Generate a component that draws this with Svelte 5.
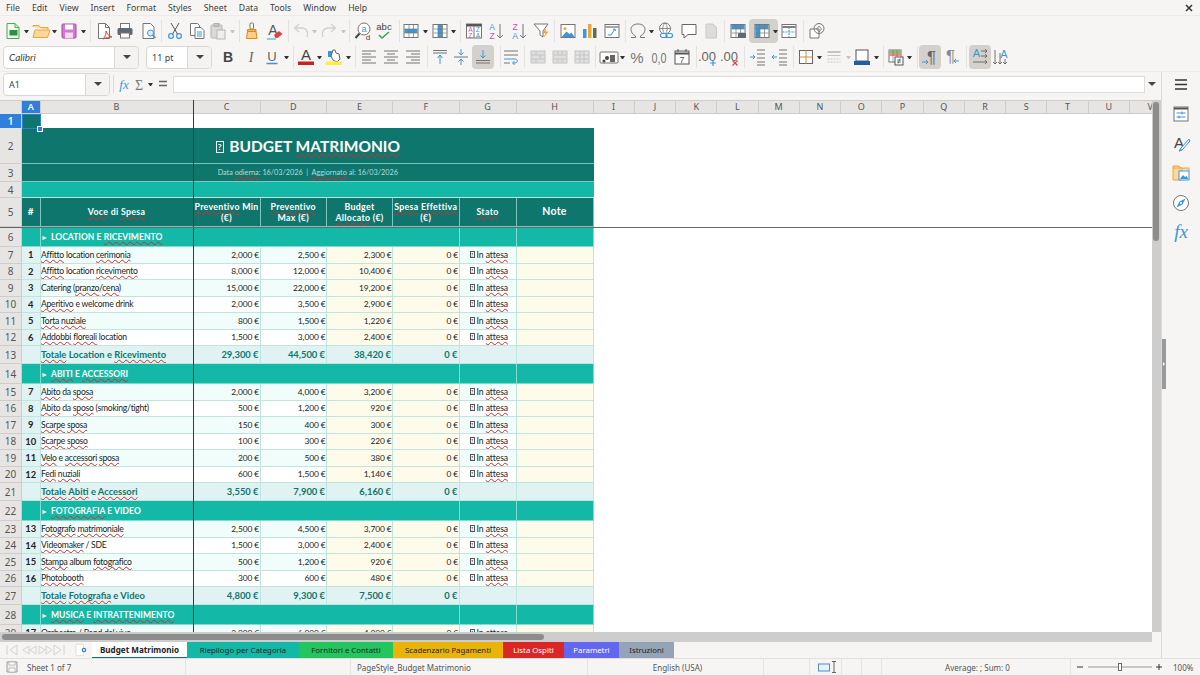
<script>
// toolbar icons, all in a 20x20 box
const G = "#757575";
const B = "#3b97da";
const table = (f) => `<rect x="3" y="3.5" width="14" height="13" fill="#fff" stroke="${G}"/>${f}<path d="M3.5 8h13M3.5 12h13M8 4v12M12.5 4v12" stroke="${G}" stroke-width=".7"/>`;
const lines = (ys, x1 = 3, x2 = 17) => ys.map((y) => `<path d="M${x1} ${y}H${x2}" stroke="${G}"/>`).join("");
const t = (s, x, y, size, fill, extra = "", fam = "Liberation Sans") => `<text x="${x}" y="${y}" font-size="${size}" fill="${fill}" font-family="${fam}" text-anchor="middle" ${extra}>${s}</text>`;
const SERIF = "Liberation Serif";

const icons = {
	new: `<path d="M4 2.5h8l4 4v11H4z" fill="#f1f9f1" stroke="#4aa853"/><path d="M12 2.5v4h4" fill="none" stroke="#4aa853"/><rect x="6.5" y="9" width="8" height="5.5" fill="#2f8f45"/>`,
	open: `<path d="M2 6V4.5h6l1.5 2H17V9" fill="#fcd9a2" stroke="#eea63c"/><path d="M2 16.5 4 9h15l-2.5 7.5z" fill="#ffd79a" stroke="#eea63c"/>`,
	save: `<rect x="3" y="3" width="14" height="14" rx="1" fill="#d678d0" stroke="#a84aa4"/><rect x="6" y="3.5" width="8" height="5" fill="#fff"/><rect x="6" y="11.5" width="8" height="5.5" fill="#f4d9f2"/>`,
	pdf: `<path d="M4.5 2.5h7l4 4v11h-11z" fill="#fff" stroke="${G}"/><path d="M11.5 2.5v4h4" fill="none" stroke="${G}"/><path d="M9 18c3-3 3-6 3-8 1 3 3 5 6 6-3 0-6 .5-9 2z" fill="none" stroke="#e0433a"/>`,
	print: `<rect x="5.5" y="2.5" width="9" height="5" fill="#fff" stroke="${G}"/><rect x="2.5" y="7" width="15" height="7" rx="1.5" fill="#5f6973"/><rect x="5.5" y="12" width="9" height="5" fill="#fff" stroke="${G}"/>`,
	preview: `<path d="M4 2.5h7.5l3.5 3.5v11.5H4z" fill="#fff" stroke="${G}"/><circle cx="11.5" cy="12" r="3" fill="#dff0fb" stroke="${B}"/><path d="M13.5 14l3 3" stroke="${B}" stroke-width="1.5"/>`,
	cut: `<path d="M6 2l6.5 11M14 2 7.500 13" stroke="#555" fill="none"/><circle cx="6" cy="15" r="2.400" fill="none" stroke="${B}" stroke-width="1.200"/><circle cx="14" cy="15" r="2.400" fill="none" stroke="${B}" stroke-width="1.200"/>`,
	copy: `<path d="M3.500 2.500h7l2 2v10h-9z" fill="#fff" stroke="${G}"/><path d="M8 6.500h6l3 3v8H8z" fill="#fff" stroke="${G}"/><path d="M10 11h5M10 13h5M10 15h5" stroke="${B}"/>`,
	paste: `<rect x="3" y="4" width="11" height="13" rx="1" fill="#d9d9d9" stroke="#b5b5b5"/><rect x="6" y="2.500" width="5" height="3" fill="#c4c4c4" stroke="#b0b0b0"/><rect x="9" y="9" width="8" height="9" fill="#eee" stroke="#b5b5b5"/>`,
	clone: `<rect x="8" y="2" width="3.500" height="6" rx="1" fill="#fff" stroke="#777"/><path d="M5.500 8.500h8.500v2h-8.500z" fill="#f5b453" stroke="#d98a1f"/><path d="M5.500 10.500h8.500l1 7h-10.500z" fill="#fbcf8a" stroke="#d98a1f"/>`,
	clear: t("A", 9, 14, 14, "#555") + `<path d="M10 14l5-4 3.500 3-5 4h-2z" fill="#e2403a"/><path d="M3 18h9" stroke="${B}"/>`,
	undo: `<path d="M16 16c2-5-1-9-5-9H5" fill="none" stroke="#d0d0d0" stroke-width="1.300"/><path d="M8 3 3.500 7 8 11" fill="none" stroke="#d0d0d0" stroke-width="1.300"/>`,
	redo: `<path d="M4 16c-2-5 1-9 5-9h6" fill="none" stroke="#d0d0d0" stroke-width="1.300"/><path d="M12 3l4.500 4L12 11" fill="none" stroke="#d0d0d0" stroke-width="1.300"/>`,
	find: `<circle cx="11" cy="8" r="6" fill="#fff" stroke="${G}"/>` + t("a", 11, 11, 9, B) + `<path d="M6.500 12.500 2.500 17" stroke="#444" stroke-width="2"/>` + t("d", 15, 19, 8, "#444"),
	spell: t("abc", 10, 9, 9.500, "#444") + `<path d="M5 14l3 3 7-6" fill="none" stroke="#3fa14a" stroke-width="1.500"/>`,
	rows: table(`<rect x="3.500" y="8" width="13" height="4" fill="${B}"/>`),
	cols: table(`<rect x="8" y="4" width="4.500" height="12" fill="${B}"/>`),
	sort: `<rect x="2.500" y="3" width="15" height="14" fill="#fff" stroke="${G}"/><rect x="2.500" y="3" width="15" height="2.500" fill="#555"/><path d="M10 5.500V17" stroke="${G}"/>` + t("A", 6.300, 11, 6.500, "#b557c9") + t("Z", 6.300, 16.500, 6.500, "#b557c9") + t("Z", 13.800, 11, 6.500, B) + t("A", 13.800, 16.500, 6.500, B),
	asc: t("A", 6, 9, 8.500, B) + t("Z", 6, 17.500, 8.500, "#b557c9") + `<path d="M14 3v14M11 14l3 3 3-3" fill="none" stroke="${G}"/>`,
	desc: t("Z", 6, 9, 8.500, "#b557c9") + t("A", 6, 17.500, 8.500, B) + `<path d="M14 3v14M11 14l3 3 3-3" fill="none" stroke="${G}"/>`,
	filter: `<path d="M3 3h14l-5 7v6l-3-2v-4z" fill="#fff" stroke="${G}"/><path d="M15 7l-3.500 5h3l-2 5 5-6.500h-3z" fill="#f0a53a"/>`,
	image: `<rect x="3" y="3.500" width="14" height="13" fill="#fff" stroke="${G}"/><circle cx="7" cy="7.500" r="1.500" fill="#f0a53a"/><path d="M3.500 16l5-5.500 3 2.500 2-1.500 3 4.500z" fill="${B}"/>`,
	chart: `<rect x="3" y="8" width="3.500" height="9" fill="${B}"/><rect x="8" y="3" width="3.500" height="14" fill="#f0a53a"/><rect x="13" y="7" width="3.500" height="10" fill="#666"/>`,
	pivot: `<rect x="3" y="3.500" width="14" height="13" fill="#fff" stroke="${G}"/><path d="M3.500 6h13" stroke="#888" stroke-width="1.500"/><path d="M6 14h3l4-6M13 8l-2 .5M13 8l.5 2" fill="none" stroke="${B}"/>`,
	omega: `<path d="M3 16.500h4.500V15C4.500 13.500 3 11 3 8.500 3 5 6 3 10 3s7 2 7 5.500c0 2.500-1.500 5-4.500 6.500v1.500H17" fill="none" stroke="${G}"/>`,
	link: `<circle cx="9" cy="7.500" r="5.500" fill="#fff" stroke="${G}"/><path d="M3.500 7.500h11M9 2c-3 3-3 8 0 11M9 2c3 3 3 8 0 11" fill="none" stroke="${G}" stroke-width=".8"/><rect x="4.500" y="12.500" width="6.500" height="4" rx="2" fill="#fff" stroke="${B}" stroke-width="1.200"/><rect x="10" y="12.500" width="6.500" height="4" rx="2" fill="none" stroke="${B}" stroke-width="1.200"/>`,
	comment: `<path d="M3 3.500h14v10H9l-4 3.500v-3.500H3z" fill="#fff" stroke="#666"/>`,
	headers: `<path d="M5 3h7l3.500 3.500V17H5z" fill="#dcdcdc" stroke="#c9c9c9"/>`,
	printarea: table(`<rect x="3.500" y="4" width="13" height="4" fill="${B}"/>`) + `<rect x="10" y="12" width="8" height="5" rx="1" fill="#5f6973"/>`,
	freeze: table(`<rect x="3.500" y="4" width="13" height="4" fill="${B}"/><rect x="3.500" y="4" width="4.500" height="12" fill="${B}"/>`),
	split: `<rect x="3" y="3.500" width="14" height="13" fill="#fff" stroke="${G}"/><path d="M3.500 6h13" stroke="#555" stroke-width="1.500"/><path d="M3.500 11h13" stroke="${B}" stroke-dasharray="2 1"/><path d="M10 6v10" stroke="${B}" stroke-dasharray="2 1"/>`,
	shapes: `<path d="M3 8h9v9H3z" fill="#fff" stroke="${G}"/><circle cx="12" cy="7.500" r="5" fill="none" stroke="${G}"/><path d="M12 5l2.500 3-2.500 3-2.500-3z" fill="none" stroke="${G}" stroke-width=".8"/>`,
	bold: t("B", 10, 15, 14, "#444", 'font-weight="bold"'),
	italic: t("I", 10, 15, 14, "#666", 'font-style="italic"', SERIF),
	under: t("U", 10, 13.500, 13, "#666") + `<path d="M4.500 16.500h11" stroke="${B}" stroke-width="1.500"/>`,
	fcolor: t("A", 10, 13, 15, "#444") + `<rect x="2" y="14.500" width="16" height="3.500" fill="#c9211e"/>`,
	bgcolor: `<path d="M4 4h6v6H4z" fill="${B}"/><path d="M9 3l2 0 1 3 3 1 1 5-3 3-4-2-2-4z" fill="#fff" stroke="#666"/><rect x="2" y="14.500" width="16" height="3.500" fill="#ffef3a"/>`,
	left: lines([4, 10, 16]) + lines([7, 13], 3, 12),
	center: lines([4, 10, 16]) + lines([7, 13], 6, 14),
	right: lines([4, 10, 16]) + lines([7, 13], 8, 17),
	top: lines([3.500, 6]) + `<path d="M10 8v9M7.500 11 10 8l2.500 3" fill="none" stroke="${B}"/>`,
	mid: lines([10]) + `<path d="M10 2v6M7.500 5.500 10 8l2.500-2.500M10 18v-6M7.500 14.500 10 12l2.500 2.500" fill="none" stroke="${B}"/>`,
	bot: lines([13.500, 16]) + `<path d="M10 3v8M7.500 8.500 10 11l2.500-2.500" fill="none" stroke="${B}"/>`,
	wrap: lines([4, 8]) + lines([16], 3, 9) + `<path d="M3 12h11c3 0 3 4 0 4h-2M13.500 14l-2 2 2 2" fill="none" stroke="${B}"/>`,
	merge: `<rect x="3" y="4" width="14" height="12" fill="#dedede" stroke="#c4c4c4"/><path d="M3.500 8h13M3.500 12h13M8 4v4M12 8v4M8 12v4" stroke="#c4c4c4"/>`,
	merge2: `<rect x="3" y="4" width="14" height="12" fill="#dedede" stroke="#c4c4c4"/><path d="M3.500 8h13M3.500 12h13M8 4v4M12 4v4M8 12v4M12 12v4" stroke="#c4c4c4"/>`,
	merge3: `<rect x="3" y="4" width="14" height="12" fill="#e2e2e2" stroke="#c4c4c4"/><path d="M3.500 8h13M3.500 12h13M8 4v12M12 4v12" stroke="#c4c4c4"/>`,
	currency: `<rect x="1" y="5" width="18" height="11" rx="1" fill="#fff" stroke="${G}"/><circle cx="8" cy="11" r="2" fill="#444"/><rect x="11" y="8" width="5" height="7" fill="#666"/><circle cx="5" cy="14" r="1.500" fill="#444"/>`,
	percent: t("%", 10, 16, 15, "#777"),
	number: t("0,0", 10, 15.500, 14, "#777", 'textLength="15" lengthAdjust="spacingAndGlyphs"'),
	date: `<rect x="3" y="4" width="14" height="13" fill="#fff" stroke="#555"/><path d="M3 6.500h14" stroke="#555" stroke-width="2"/><path d="M6 2v3M14 2v3" stroke="#555"/>` + t("7", 10, 15.500, 9, "#555"),
	adddec: t(".00", 9, 14, 13, "#666") + `<path d="M15 13v6M12 16h6" stroke="${B}" stroke-width="1.200"/>`,
	deldec: t(".00", 9, 14, 13, "#666") + `<path d="M12.500 13.500l5 5M17.500 13.500l-5 5" stroke="#e0433a" stroke-width="1.200"/>`,
	indent: lines([3, 7, 11, 15, 18], 9, 17) + `<path d="M2 10h5M5 8l2 2-2 2" fill="none" stroke="${B}"/>`,
	outdent: lines([3, 7, 11, 15, 18], 9, 17) + `<path d="M7 10H2M4 8l-2 2 2 2" fill="none" stroke="${B}"/>`,
	borders: `<rect x="3.500" y="3.500" width="13" height="13" fill="#fff" stroke="#666"/><path d="M10 3.500v13M3.500 10h13" stroke="#d98a3a"/>`,
	bstyle: `<path d="M3.500 4h13v2h-13zM3.500 8h13v1h-13z" fill="#c4c4c4"/><path d="M3.500 12h13M3.500 15h13" stroke="#c8c8c8" stroke-dasharray="2 1"/>`,
	bcolor: `<rect x="4" y="3" width="12" height="11" fill="#fff" stroke="#555"/><rect x="2" y="14" width="16" height="4" fill="#1c5fa8"/>`,
	cond: `<rect x="3" y="3" width="12" height="12" fill="#fff" stroke="${G}"/><rect x="3" y="3" width="12" height="3" fill="#7cc27f"/><rect x="3" y="6" width="12" height="3" fill="#ee8a80"/><path d="M7 3v12M11 3v12" stroke="${G}" stroke-width=".6"/><rect x="9" y="10" width="8" height="8" fill="#fff" stroke="#555"/><path d="M11 13h4M11 15h4M14 11.500l-2 5" stroke="#555" stroke-width=".8"/>`,
	ltr: t("¶", 11.500, 16, 17, "#666") + `<path d="M2 15h6M6 13l2 2-2 2" fill="none" stroke="${B}"/>`,
	rtl: t("¶", 8.500, 15, 17, "#888") + `<path d="M17 14h-5M14 12l-2 2 2 2" fill="none" stroke="${B}"/>`,
	horiz: t("A", 6.500, 10, 11, B) + `<path d="M11 4h6M15 2l2 2-2 2M11 9h6M15 7l2 2-2 2M3 15h14M15 13l2 2-2 2" fill="none" stroke="#555" stroke-width=".8"/>`,
	vert: t("A", 13, 11, 11, B) + `<path d="M4 3v14M2 15l2 2 2-2M9 6v11M7 15l2 2 2-2M14 12v5M12 15l2 2 2-2" fill="none" stroke="#555" stroke-width=".8"/>`,
	fx: t("fx", 10, 14.500, 13, B, 'font-style="italic"', SERIF),
	sigma: t("Σ", 10, 15.500, 14, "#777", "", SERIF),
	equal: `<path d="M6 7.500h8M6 11.500h8" stroke="#666" stroke-width="1.500"/>`,
	menu: `<path d="M4 5h12M4 9.500h12M4 14h12" stroke="#333" stroke-width="1.500"/>`,
	props: `<rect x="3" y="3" width="14" height="14" fill="#fff" stroke="${G}"/><path d="M3 4.500h14" stroke="#555" stroke-width="2"/><path d="M5.500 9h9M5.500 13h9" stroke="${B}"/><path d="M11 7.500v3M8 11.500v3" stroke="${B}"/>`,
	styles: t("A", 8, 14, 15, "#444") + `<path d="M18 5l-8 9-2 3 3-1 8-9z" fill="#fff" stroke="${B}"/><path d="M10 14l-2 3.500 3-1z" fill="${B}"/>`,
	gallery: `<path d="M2 5V3h6l1.500 2H18v3" fill="#fcd9a2" stroke="#eea63c"/><path d="M2 5h9v12H2z" fill="#ffd79a" stroke="#eea63c"/><rect x="8" y="8" width="10" height="9" fill="#fff" stroke="${B}"/><path d="M9 16l3-4 2 2 1.500-1 2 3z" fill="${B}"/>`,
	navigator: `<circle cx="10" cy="10" r="7.500" fill="#fff" stroke="${G}"/><path d="M14.500 5.500 11.500 11.500 5.500 14.500 8.500 8.500z" fill="${B}"/><circle cx="10" cy="10" r="1" fill="#fff"/>`,
	fxbig: t("fx", 10, 16, 19, B, 'font-style="italic"', SERIF)
};

// place items on a bar: [icon, centre x, width?, flags]
function place(items, startX) {
	let x = startX;
	return items.map(([name, c, w = name === "dd" ? 6 : name === "sep" ? 1 : 20, flag = ""]) => {
		const ml = c - w / 2 - x;
		x = c + w / 2;
		return { name, w, ml, flag };
	});
}

const bar1 = place([
	["new", 13], ["dd", 27], ["open", 42], ["dd", 56], ["save", 71], ["dd", 86], ["sep", 93],
	["pdf", 107], ["print", 128], ["preview", 152], ["sep", 164],
	["cut", 178], ["copy", 200], ["paste", 221], ["dd", 236, 6, "off"], ["sep", 243],
	["clone", 256], ["clear", 278], ["sep", 292],
	["undo", 305], ["dd", 319, 6, "off"], ["redo", 334], ["dd", 349, 6, "off"], ["sep", 355],
	["find", 369], ["spell", 390], ["sep", 405],
	["rows", 417], ["dd", 432], ["cols", 447], ["dd", 461], ["sep", 468],
	["sort", 482], ["asc", 504], ["desc", 527], ["filter", 549], ["sep", 562],
	["image", 576], ["chart", 598], ["pivot", 620], ["sep", 633],
	["omega", 646], ["dd", 660], ["link", 675], ["comment", 698], ["headers", 720], ["sep", 733],
	["printarea", 747], ["freeze", 772.5, 29, "on drop"], ["split", 798], ["sep", 812], ["shapes", 826]
], 0);

const bar2 = place([
	["bold", 228], ["italic", 251], ["under", 272], ["dd", 287], ["sep", 294],
	["fcolor", 307], ["dd", 321], ["bgcolor", 336], ["dd", 351], ["sep", 358],
	["left", 372], ["center", 394], ["right", 416], ["sep", 430],
	["top", 443], ["mid", 464], ["bot", 486, 22, "on"], ["sep", 503], ["wrap", 514], ["sep", 527],
	["merge", 541], ["merge2", 563], ["merge3", 585], ["sep", 598],
	["currency", 612], ["dd", 626], ["percent", 641], ["number", 663], ["date", 686], ["sep", 700],
	["adddec", 712], ["deldec", 734], ["sep", 748], ["indent", 762], ["outdent", 784], ["sep", 797],
	["borders", 810], ["dd", 824], ["bstyle", 839], ["dd", 854, 6, "off"], ["bcolor", 868], ["dd", 883], ["sep", 890],
	["cond", 903], ["dd", 917], ["sep", 925],
	["ltr", 938, 22, "on"], ["rtl", 960], ["sep", 974], ["horiz", 988, 22, "on"], ["vert", 1009]
], 212);

const menus = ["File", "Edit", "View", "Insert", "Format", "Styles", "Sheet", "Data", "Tools", "Window", "Help"];

const columns = [
	["A", 18.5], ["B", 153], ["C", 67], ["D", 66.5], ["E", 66], ["F", 66.5], ["G", 57], ["H", 77],
	...["I", "J", "K", "L", "M", "N", "O", "P", "Q", "R", "S", "T", "U", "V"].map((c) => [c, 41.27])
];

const headers = [
	["Preventivo Min", "(€)"],
	["Preventivo", "Max (€)"],
	["Budget", "Allocato (€)"],
	["Spesa Effettiva", "(€)"]
];

const sections = [
	{
		title: "LOCATION E RICEVIMENTO",
		items: [
			[1, "Affitto location cerimonia", "2,000", "2,500", "2,300"],
			[2, "Affitto location ricevimento", "8,000", "12,000", "10,400"],
			[3, "Catering (pranzo/cena)", "15,000", "22,000", "19,200"],
			[4, "Aperitivo e welcome drink", "2,000", "3,500", "2,900"],
			[5, "Torta nuziale", "800", "1,500", "1,220"],
			[6, "Addobbi floreali location", "1,500", "3,000", "2,400"]
		],
		total: ["Totale Location e Ricevimento", "29,300", "44,500", "38,420"]
	},
	{
		title: "ABITI E ACCESSORI",
		items: [
			[7, "Abito da sposa", "2,000", "4,000", "3,200"],
			[8, "Abito da sposo (smoking/tight)", "500", "1,200", "920"],
			[9, "Scarpe sposa", "150", "400", "300"],
			[10, "Scarpe sposo", "100", "300", "220"],
			[11, "Velo e accessori sposa", "200", "500", "380"],
			[12, "Fedi nuziali", "600", "1,500", "1,140"]
		],
		total: ["Totale Abiti e Accessori", "3,550", "7,900", "6,160"]
	},
	{
		title: "FOTOGRAFIA E VIDEO",
		items: [
			[13, "Fotografo matrimoniale", "2,500", "4,500", "3,700"],
			[14, "Videomaker / SDE", "1,500", "3,000", "2,400"],
			[15, "Stampa album fotografico", "500", "1,200", "920"],
			[16, "Photobooth", "300", "600", "480"]
		],
		total: ["Totale Fotografia e Video", "4,800", "9,300", "7,500"]
	},
	{
		title: "MUSICA E INTRATTENIMENTO",
		items: [[17, "Orchestra / Band dal vivo", "3,000", "6,000", "4,800"]]
	}
];

// flatten into numbered sheet rows, starting at row 6
const rows = [];
let rowNo = 6;
for (const s of sections) {
	rows.push({ no: rowNo++, type: "section", title: s.title });
	s.items.forEach((item, i) => rows.push({ no: rowNo++, type: "item", item, tint: i % 2 === 0 }));
	if (s.total) rows.push({ no: rowNo++, type: "total", total: s.total });
}

const misspelt = new Set([
	"MATRIMONIO", "odierna", "Aggiornato", "Preventivo", "Voce", "Spesa", "Effettiva", "Stato", "Allocato", "RICEVIMENTO", "ACCESSORI",
	"ABITI", "FOTOGRAFIA", "MUSICA", "INTRATTENIMENTO", "Affitto", "cerimonia", "ricevimento", "pranzo", "cena", "Aperitivo",
	"Torta", "nuziale", "Addobbi", "floreali", "Abito", "sposa", "sposo", "Scarpe", "Velo", "accessori", "Fedi", "nuziali",
	"Fotografo", "matrimoniale", "Videomaker", "Stampa", "fotografico", "Photobooth", "Orchestra", "attesa", "Totale", "Ricevimento",
	"Abiti", "Accessori", "Fotografia"
]);
const parts = (text) => text.split(/([^\p{L}]+)/u);

const tabs = [
	{ label: "Budget Matrimonio", w: 95, cls: "active" },
	{ label: "Riepilogo per Categoria", w: 112, color: "#14b8a6", ink: "#222" },
	{ label: "Fornitori e Contatti", w: 94, color: "#22c55e", ink: "#222" },
	{ label: "Scadenzario Pagamenti", w: 110, color: "#eab308", ink: "#222" },
	{ label: "Lista Ospiti", w: 61, color: "#dc2626", ink: "#fff" },
	{ label: "Parametri", w: 55, color: "#6366f1", ink: "#fff" },
	{ label: "Istruzioni", w: 55, color: "#94a3b8", ink: "#222" }
];

const sideIcons = ["menu", "props", "styles", "gallery", "navigator", "fxbig"];
</script>

{#snippet spell(text)}
	<span class="txt">{#each parts(text) as p}{#if misspelt.has(p)}<span class="bad">{p}</span>{:else}{p}{/if}{/each}</span>
{/snippet}

{#snippet icon(name, size = 20)}
	<svg width={size} height={size} viewBox="0 0 20 20">{@html icons[name]}</svg>
{/snippet}

{#snippet tools(list)}
	{#each list as it}
		{#if it.name === "sep"}
			<span class="sep" style="margin-left:{it.ml}px"></span>
		{:else if it.name === "dd"}
			<span class="dd" class:off={it.flag === "off"} style="margin-left:{it.ml}px"></span>
		{:else}
			<span class="tool {it.flag}" style="margin-left:{it.ml}px;width:{it.w}px">
				{@render icon(it.name)}
				{#if it.flag.includes("drop")}<span class="dd"></span>{/if}
			</span>
		{/if}
	{/each}
{/snippet}

{#snippet tofu()}<span class="tofu">?</span>{/snippet}

<div class="app">
	<div class="menubar">
		{#each menus as m}<span>{m}</span>{/each}
		<svg class="close" width="8" height="8" viewBox="0 0 8 8"><path d="M1 1l6 6M7 1 1 7" stroke="#333" stroke-width="1.500" /></svg>
	</div>
	<div class="toolbar first">{@render tools(bar1)}</div>
	<div class="toolbar second">
		<div class="combo font"><span class="val">Calibri</span><span class="btn"><span class="dd big"></span></span></div>
		<div class="combo size"><span class="val">11 pt</span><span class="btn"><span class="dd big"></span></span></div>
		{@render tools(bar2)}
	</div>

	<div class="body">
		<div class="work">
			<div class="formula">
				<div class="combo name"><span class="val">A1</span><span class="btn"><span class="dd big"></span></span></div>
				<span class="sep"></span>
				<span class="ftool">{@render icon("fx")}</span>
				<span class="ftool sigma">{@render icon("sigma")}</span>
				<span class="dd"></span>
				<span class="ftool">{@render icon("equal")}</span>
				<div class="input"></div>
				<span class="dd big"></span>
			</div>

			<div class="sheetwrap">
				<div class="sheet">
					<div class="colhead">
						<span class="corner"></span>
						{#each columns as [c, w]}
							<span class="col" class:cur={c === "A"} style="width:{w}px">{c}</span>
						{/each}
					</div>

					<div class="row r1">
						<span class="rn cur">1</span>
						<span class="cell selected"><i></i></span>
					</div>
					<div class="row r2">
						<span class="rn">2</span>
						<span class="cell title"><span>{@render tofu()} {@render spell("BUDGET MATRIMONIO")}</span></span>
					</div>
					<div class="row r3">
						<span class="rn">3</span>
						<span class="cell subtitle">{@render spell("Data odierna: 16/03/2026  |  Aggiornato al: 16/03/2026")}</span>
					</div>
					<div class="row r4">
						<span class="rn">4</span>
						<span class="cell band"></span>
					</div>
					<div class="row r5">
						<span class="rn">5</span>
						<span class="cell hd big">#</span>
						<span class="cell hd">{@render spell("Voce di Spesa")}</span>
						{#each headers as [a, b]}
							<span class="cell hd">{@render spell(a)}<br />{@render spell(b)}</span>
						{/each}
						<span class="cell hd">{@render spell("Stato")}</span>
						<span class="cell hd note">Note</span>
					</div>

					{#each rows as r}
						<div class="row {r.type}">
							<span class="rn">{r.no}</span>
							{#if r.type === "section"}
								<span class="cell sec"></span>
								<span class="cell sec wide"><b>►</b>{@render spell(r.title)}</span>
								<span class="cell sec"></span>
								<span class="cell sec"></span>
							{:else if r.type === "item"}
								<span class="cell num">{r.item[0]}</span>
								<span class="cell voce" class:tint={r.tint}>{@render spell(r.item[1])}</span>
								<span class="cell amt" class:tint={r.tint}>{r.item[2]} €</span>
								<span class="cell amt" class:tint={r.tint}>{r.item[3]} €</span>
								<span class="cell amt cream">{r.item[4]} €</span>
								<span class="cell amt cream">0 €</span>
								<span class="cell stato" class:tint={r.tint}><span>{@render tofu()} In {@render spell("attesa")}</span></span>
								<span class="cell cream"></span>
							{:else}
								<span class="cell tot"></span>
								<span class="cell tot label">{@render spell(r.total[0])}</span>
								<span class="cell tot val">{r.total[1]} €</span>
								<span class="cell tot val">{r.total[2]} €</span>
								<span class="cell tot val">{r.total[3]} €</span>
								<span class="cell tot val">0 €</span>
								<span class="cell tot"></span>
								<span class="cell tot"></span>
							{/if}
						</div>
					{/each}

					<!-- freeze pane lines sit over the cells -->
					<span class="freeze-v"></span>
					<span class="freeze-h"></span>
				</div>
				<div class="vscroll"><span></span></div>
			</div>

			<div class="hscroll"><span></span></div>

			<div class="tabs">
				<div class="nav">
					<svg width="68" height="16" viewBox="0 0 68 16">
						<path d="M7 3v10M17 3l-7 5 7 5zM29 4l-6 4 6 4zM36 4l-6 4 6 4zM39 4l6 4-6 4zM46 4l6 4-6 4zM54 3l7 5-7 5zM64 3v10" fill="none" stroke="#d4d2cf" />
					</svg>
				</div>
				<div class="addsheet">
					<svg width="18" height="14" viewBox="0 0 18 14"><path d="M1 1h8v12H1z" fill="#fff" stroke="#ddd" /><circle cx="9.500" cy="7" r="2.500" fill="#3f86c9" /><circle cx="9.500" cy="7" r="1" fill="#fff" /></svg>
				</div>
				{#each tabs as tab}
					<span class="tab {tab.cls ?? ''}" style="width:{tab.w}px;background:{tab.color ?? '#fff'};color:{tab.ink ?? '#222'}">{tab.label}</span>
				{/each}
			</div>
		</div>

		<div class="sidebar">
			{#each sideIcons as s}<span>{@render icon(s)}</span>{/each}
			<span class="handle"></span>
		</div>
	</div>

	<div class="status">
		<span class="st first">
			<svg width="12" height="12" viewBox="0 0 12 12"><path d="M1 1h10v10H1z" fill="#eee" stroke="#999" /><path d="M3 1h6v3H3zM3 7h6v4H3z" fill="#fff" stroke="#aaa" stroke-width=".7" /></svg>
			Sheet 1 of 7
		</span>
		<span class="st gap1"></span>
		<span class="st page">PageStyle_Budget Matrimonio</span>
		<span class="st lang">English (USA)</span>
		<span class="st blank"></span>
		<span class="st sel">
			<svg width="30" height="12" viewBox="0 0 30 12"><rect x="8.500" y="3" width="11" height="7" fill="#e8f2fa" stroke="#4a90c8" /><path d="M24 0v12M22 .5h4M22 11.500h4" stroke="#666" /></svg>
		</span>
		<span class="st s1"></span>
		<span class="st s1"></span>
		<span class="st sum">Average: ; Sum: 0</span>
		<span class="zoom">
			<svg width="94" height="12" viewBox="0 0 94 12"><path d="M0 6h6M79 6h6M82 3v6" stroke="#333" /><path d="M11 6h64" stroke="#999" /><rect x="41.500" y="2.500" width="3" height="7" fill="#fff" stroke="#666" /></svg>
		</span>
		<span class="pct">100%</span>
	</div>
</div>

<style>
	:global(body) {
		margin: 0;
	}

	.app {
		width: 1200px;
		height: 675px;
		overflow: hidden;
		display: flex;
		flex-direction: column;
		background: #f6f5f4;
		font-family: "Noto Sans", sans-serif;
		font-size: 9px;
		color: #444;
	}

	.menubar {
		height: 16px;
		display: flex;
		align-items: center;
		gap: 12px;
		padding: 0 6px;
		font-size: 8.7px;
		color: #3d3d3d;
		border-bottom: 1px solid #ecebe9;
		box-sizing: border-box;
		position: relative;
	}

	.close {
		position: absolute;
		right: 7px;
		top: 4px;
	}

	.toolbar {
		height: 28px;
		display: flex;
		align-items: center;
		flex: none;
		box-sizing: border-box;
	}

	.toolbar.first {
		padding-top: 2px;
	}

	.toolbar.second {
		padding-left: 3px;
		padding-bottom: 1px;
		border-bottom: 1px solid #ecebe9;
	}

	.tool {
		flex: none;
		height: 24px;
		display: flex;
		align-items: center;
		justify-content: center;
		border-radius: 4px;
	}

	.tool.on {
		background: #d4d1cd;
	}

	.tool.drop {
		justify-content: flex-start;
		padding-left: 3px;
		gap: 1px;
		box-sizing: border-box;
	}

	.tool svg,
	.ftool svg,
	.sidebar svg {
		display: block;
	}

	.sep {
		flex: none;
		width: 1px;
		height: 22px;
		background: #e4e2df;
	}

	.dd {
		flex: none;
		height: 0;
		box-sizing: content-box;
		display: inline-block;
		border-left: 2.5px solid transparent;
		border-right: 2.5px solid transparent;
		border-top: 3px solid #333;
		width: 1px;
	}

	.dd.off {
		border-top-color: #c4c4c4;
	}

	.dd.big {
		border-left-width: 4px;
		border-right-width: 4px;
		border-top-width: 4px;
		border-top-color: #444;
		width: 0;
	}

	.combo {
		flex: none;
		height: 23px;
		display: flex;
		border: 1px solid #d9d7d4;
		border-radius: 4px;
		background: #fff;
		box-sizing: border-box;
		overflow: hidden;
	}

	.combo .val {
		flex: 1;
		padding-left: 5px;
		line-height: 21px;
		font-size: 9px;
		color: #444;
	}

	.combo .btn {
		width: 23px;
		background: #f4f3f1;
		border-left: 1px solid #d9d7d4;
		display: flex;
		align-items: center;
		justify-content: center;
	}

	.combo.font {
		width: 136px;
	}

	.combo.font .val {
		font-style: italic;
		font-family: Lato, sans-serif;
		font-size: 10px;
	}

	.combo.size {
		width: 66px;
		margin-left: 7px;
	}

	.combo.name {
		width: 107px;
		margin-left: 3px;
	}

	.body {
		flex: 1;
		display: flex;
		min-height: 0;
	}

	.work {
		width: 1161px;
		display: flex;
		flex-direction: column;
	}

	.formula {
		height: 28px;
		display: flex;
		align-items: center;
		flex: none;
		box-sizing: border-box;
		padding-bottom: 4px;
	}

	.formula .sep {
		margin-left: 3px;
		height: 18px;
		background: #dcdad7;
	}

	.ftool {
		flex: none;
		display: flex;
		justify-content: center;
		width: 20px;
	}

	.ftool.sigma {
		margin-left: -5px;
	}

	.formula > .dd {
		margin-left: -1px;
	}

	.input {
		width: 972px;
		height: 17px;
		margin: 0 4px 0 0;
		background: #fff;
		border: 1px solid #dedcd9;
		box-sizing: border-box;
	}

	.sheetwrap {
		flex: 1;
		display: flex;
		min-height: 0;
	}

	.sheet {
		width: 1152px;
		position: relative;
		overflow: hidden;
		background: #fff;
		font-family: Lato, sans-serif;
		font-size: 8.6px;
		color: #222;
	}

	.colhead {
		display: flex;
		height: 14px;
		font-family: "Noto Sans", sans-serif;
		font-size: 9px;
		color: #555;
		background: #e6e5e3;
		border-top: 1px solid #cfcdca;
		box-sizing: border-box;
	}

	.corner {
		width: 22px;
		flex: none;
		border-right: 1px solid #cfcdca;
		box-sizing: border-box;
	}

	.col {
		flex: none;
		text-align: center;
		line-height: 12px;
		border-right: 1px solid #cfcdca;
		border-bottom: 1px solid #cfcdca;
		box-sizing: border-box;
	}

	.col.cur,
	.rn.cur {
		background: #2f80dc;
		color: #fff;
		font-weight: 600;
	}

	.row {
		display: grid;
		grid-template-columns: 22px 18.5px 153px 67px 66.5px 66px 66.5px 57px 77px;
		width: 593.5px;
		height: 16.5px;
	}

	.row.r1 {
		height: 14px;
	}

	.row.r2 {
		height: 36px;
	}

	.row.r3 {
		height: 18px;
	}

	.row.r4 {
		height: 16px;
	}

	.row.r5 {
		height: 29px;
	}

	.row.section {
		height: 20px;
	}

	.row.total {
		height: 18px;
	}

	.rn {
		font-family: "Noto Sans", sans-serif;
		font-size: 10px;
		color: #555;
		background: #e6e5e3;
		border-right: 1px solid #cfcdca;
		border-bottom: 1px solid #cfcdca;
		box-sizing: border-box;
		display: flex;
		align-items: center;
		justify-content: center;
	}

	.cell {
		box-sizing: border-box;
		display: flex;
		align-items: center;
		white-space: nowrap;
		overflow: hidden;
		border-right: 1px solid #bfe5df;
		border-bottom: 1px solid #bfe5df;
	}

	.bad {
		text-decoration: underline wavy #e0262a 1px;
		text-decoration-skip-ink: none;
		text-underline-offset: 1px;
	}

	.selected {
		background: #0f766e;
		outline: 1.5px solid #2f80dc;
		outline-offset: -1px;
		overflow: visible;
		position: relative;
		border: 0;
		z-index: 2;
	}

	.selected i {
		position: absolute;
		right: -2.5px;
		bottom: -2.5px;
		width: 4px;
		height: 4px;
		background: #2f80dc;
		border: 0.5px solid #fff;
	}

	.title,
	.subtitle,
	.band {
		grid-column: 2 / -1;
		justify-content: center;
		border-right: 0;
		border-bottom: 1px solid #7cc6bb;
	}

	.title {
		background: #0f766e;
		color: #fff;
		font-weight: 700;
		font-size: 15.5px;
	}

	.title .tofu {
		width: 8px;
		height: 12px;
		font-size: 8px;
		line-height: 10px;
		border-color: #fff;
		margin-right: 2px;
		vertical-align: -1px;
	}

	.subtitle {
		background: #0f766e;
		color: #b6ddd8;
		font-size: 7.25px;
	}

	.subtitle .txt {
		white-space: pre;
	}

	.band {
		background: #14b8a6;
		border-bottom-color: #bfe5df;
	}

	.hd {
		background: #0f766e;
		color: #fff;
		font-weight: 700;
		font-size: 8.8px;
		line-height: 11.5px;
		text-align: center;
		letter-spacing: 0.3px;
		border-color: #7cc6bb;
		display: block;
		align-content: center;
	}

	.hd.big {
		font-size: 10px;
	}

	.hd.note {
		font-size: 10.5px;
	}

	.sec {
		background: #14b8a6;
		color: #fff;
		font-weight: 700;
		font-size: 8.5px;
		letter-spacing: 0.05px;
		border-color: #7fdccf;
	}

	.sec.wide {
		grid-column: 3 / 8;
		padding-left: 0.5px;
	}

	.sec b {
		font-size: 7px;
		margin-right: 4px;
		width: 6px;
	}

	.num {
		background: #e0f2f1;
		justify-content: center;
		font-weight: 700;
		font-size: 9.4px;
	}

	.voce {
		padding-left: 0.5px;
		letter-spacing: -0.25px;
	}

	.tint {
		background: #f0fdfa;
	}

	.amt {
		justify-content: flex-end;
		padding-right: 0.5px;
		font-size: 8.4px;
		letter-spacing: -0.1px;
	}

	.cream {
		background: #fffbeb;
	}

	.stato {
		padding-left: 10px;
		letter-spacing: -0.1px;
	}

	.tofu {
		display: inline-block;
		box-sizing: border-box;
		width: 5px;
		height: 7px;
		border: 0.5px solid #555;
		font-size: 5px;
		line-height: 6px;
		text-align: center;
		overflow: hidden;
	}

	.tot {
		background: #e0f2f1;
		color: #0f766e;
		font-weight: 700;
	}

	.tot.val {
		justify-content: flex-end;
		padding-right: 1px;
		font-size: 9.4px;
	}

	.tot.label {
		padding-left: 0.5px;
		font-size: 9.4px;
	}

	.freeze-v {
		position: absolute;
		left: 193px;
		top: 0;
		bottom: 0;
		width: 1px;
		background: #3a3a3a;
		z-index: 3;
	}

	.freeze-h {
		position: absolute;
		left: 0;
		right: 0;
		top: 127px;
		height: 1px;
		background: #666;
		z-index: 3;
	}

	.vscroll {
		width: 9px;
		background: #cdcdcd;
		padding: 2px 1px 0;
		box-sizing: border-box;
	}

	.vscroll span {
		display: block;
		height: 139px;
		width: 6px;
		background: #8c8c8c;
		border-radius: 3px;
	}

	.hscroll {
		height: 10px;
		flex: none;
		width: 1152px;
		background: #cdcdcd;
		padding: 2px 0 0 2px;
		box-sizing: border-box;
	}

	.hscroll span {
		display: block;
		width: 542px;
		height: 6px;
		background: #8c8c8c;
		border-radius: 3px;
	}

	.tabs {
		height: 16px;
		flex: none;
		display: flex;
		align-items: stretch;
	}

	.nav {
		width: 75px;
		flex: none;
	}

	.nav svg {
		display: block;
	}

	.addsheet {
		width: 17px;
		flex: none;
		display: flex;
		align-items: center;
	}

	.tab {
		flex: none;
		box-sizing: border-box;
		text-align: center;
		line-height: 16px;
		font-size: 7.8px;
		white-space: nowrap;
	}

	.tab.active {
		font-weight: 700;
		font-size: 8.1px;
		border-bottom: 1.5px solid #0f766e;
		line-height: 15px;
	}

	.sidebar {
		flex: 1;
		position: relative;
		border-left: 1px solid #dcdad7;
		display: flex;
		flex-direction: column;
		align-items: center;
		gap: 9.4px;
		padding-top: 3px;
	}

	.handle {
		position: absolute;
		left: 0;
		top: 267px;
		width: 4px;
		height: 50px;
		background: #9a9a9a;
		display: flex;
		align-items: center;
	}

	.handle::after {
		content: "";
		border-left: 2px solid #fff;
		border-top: 2px solid transparent;
		border-bottom: 2px solid transparent;
		margin-left: 1px;
	}

	.status {
		height: 17px;
		flex: none;
		display: flex;
		align-items: center;
		border-top: 1px solid #e2e0dd;
		box-sizing: border-box;
		font-size: 8px;
		color: #555;
	}

	.st {
		box-sizing: border-box;
		height: 100%;
		display: flex;
		align-items: center;
		border-right: 1px solid #e6e4e1;
		flex: none;
	}

	.st.first {
		width: 186px;
		padding-left: 6px;
		gap: 9px;
	}

	.gap1 {
		width: 165px;
	}

	.page {
		width: 237px;
		padding-left: 6px;
	}

	.lang {
		width: 176px;
		justify-content: center;
		padding-left: 4px;
	}

	.blank {
		width: 46px;
	}

	.sel {
		width: 32px;
	}

	.s1 {
		width: 20px;
	}

	.sum {
		width: 189px;
		justify-content: center;
		padding-left: 3px;
	}

	.zoom {
		width: 100px;
		padding-left: 6px;
		display: flex;
		flex: none;
		box-sizing: border-box;
	}

	.pct {
		padding-left: 2px;
	}
</style>
